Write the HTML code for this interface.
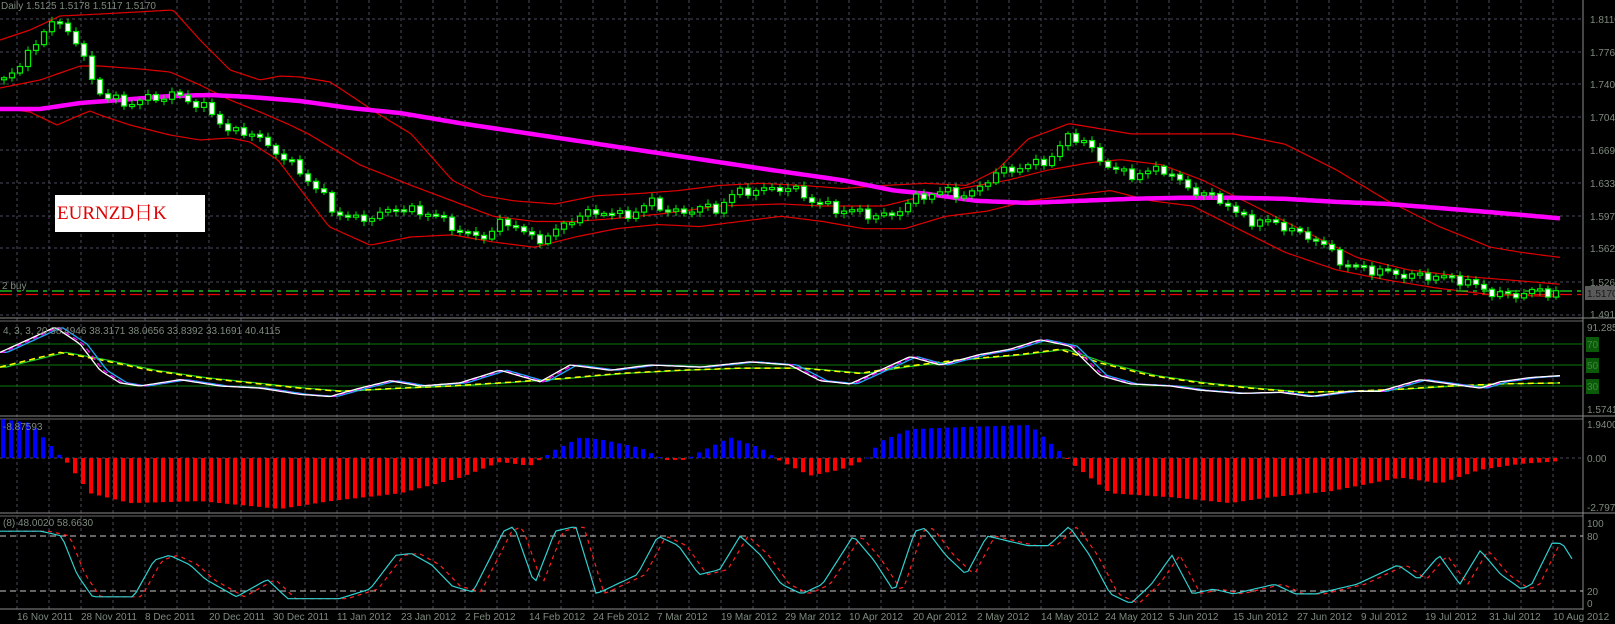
<!DOCTYPE html>
<html><head><meta charset="utf-8"><style>
html,body{margin:0;padding:0;background:#000;overflow:hidden}
svg{display:block}
text{font-family:"Liberation Sans",sans-serif;font-size:10px;fill:#7d8a7d}
.lbl{position:absolute;left:55px;top:195px;width:150px;height:37px;background:#fff;color:#e00000;font-family:"Liberation Serif","Noto Serif CJK SC",serif;font-size:19px;line-height:37px;padding-left:2px;box-sizing:border-box}
</style></head><body>
<div style="position:relative;width:1615px;height:624px">
<svg id="s" width="1615" height="624" viewBox="0 0 1615 624">
<g id="grid"></g>
<g id="g"></g>
<text x="1" y="9" font-size="9">Daily 1.5125 1.5178 1.5117 1.5170</text>
<text x="2" y="289" font-size="9">2 buy</text>
<text x="3" y="334" font-size="9">4, 3, 3, 20 38.4946 38.3171 38.0656 33.8392 33.1691 40.4115</text>
<text x="3" y="430" font-size="9">-8.87593</text>
<text x="3" y="526" font-size="9">(8) 48.0020 58.6630</text>
<g font-size="10">
<text x="1590" y="23">1.8110</text><text x="1590" y="56">1.7760</text><text x="1590" y="88">1.7400</text>
<text x="1590" y="121">1.7048</text><text x="1590" y="154">1.6690</text><text x="1590" y="187">1.6330</text>
<text x="1590" y="220">1.5970</text><text x="1590" y="252">1.5620</text><text x="1590" y="286">1.5260</text>
<text x="1590" y="318">1.4910</text>
<text x="1587" y="331">91.2858</text><text x="1587" y="413">1.5741</text>
<text x="1587" y="428">1.9400</text><text x="1587" y="462">0.00</text><text x="1587" y="511">-2.7978</text>
<text x="1587" y="527">100</text><text x="1587" y="540">80</text><text x="1587" y="595">20</text><text x="1587" y="607">0</text>
</g>
<rect x="1585" y="286" width="30" height="14" fill="#5a5a5a"/>
<text x="1587" y="297" style="fill:#1a1a1a">1.5170</text>
<rect x="1586" y="337" width="13" height="15" fill="#0a5a0a"/><text x="1587" y="348" style="fill:#3a8a3a">70</text>
<rect x="1586" y="358" width="13" height="15" fill="#0a5a0a"/><text x="1587" y="369" style="fill:#3a8a3a">50</text>
<rect x="1586" y="379" width="13" height="15" fill="#0a5a0a"/><text x="1587" y="390" style="fill:#3a8a3a">30</text>
<g id="dates" font-size="10"></g>
</svg>
<div class="lbl">EURNZD日K</div>
</div>
<script>
var NS="http://www.w3.org/2000/svg";
var G=document.getElementById('g'),GR=document.getElementById('grid');
function el(t,a,p){var e=document.createElementNS(NS,t);for(var k in a)e.setAttribute(k,a[k]);(p||G).appendChild(e);return e;}
function interp(P,x){if(x<=P[0][0])return P[0][1];for(var i=1;i<P.length;i++){if(x<=P[i][0]){var a=P[i-1],b=P[i];return a[1]+(b[1]-a[1])*(x-a[0])/(b[0]-a[0]);}}return P[P.length-1][1];}
function conv(P){return P.map(function(p){return[p[0]*1.028,p[1]*1.03];});}
function path(P,step,x0,x1){var d='';for(var x=x0;x<=x1;x+=step){d+=(d?'L':'M')+x.toFixed(1)+' '+interp(P,x).toFixed(1);}return d;}
for(var k=0;k<=48;k++){var x=17+32*k;el('line',{x1:x,y1:0,x2:x,y2:609,stroke:'#4a4a5a','stroke-dasharray':'3,3'},GR);}
[19,52,84,117,150,183,216,248,282,315].forEach(function(y){el('line',{x1:0,y1:y,x2:1583,y2:y,stroke:'#4a4a5a','stroke-dasharray':'3,3'},GR);});
[[318,321],[416,419],[513,516]].forEach(function(p){el('line',{x1:0,y1:p[0],x2:1615,y2:p[0],stroke:'#8a8a8a'},GR);el('line',{x1:0,y1:p[1],x2:1583,y2:p[1],stroke:'#6a6a6a'},GR);});
el('line',{x1:0,y1:609,x2:1583,y2:609,stroke:'#8a8a8a'},GR);
el('line',{x1:1583,y1:0,x2:1583,y2:610,stroke:'#8a8a8a'},GR);
[344,365,386].forEach(function(y){el('line',{x1:0,y1:y,x2:1583,y2:y,stroke:'#0c7a0c'},GR);});
[536,591].forEach(function(y){el('line',{x1:0,y1:y,x2:1583,y2:y,stroke:'#c8c8c8','stroke-dasharray':'6,4'},GR);});
el('line',{x1:0,y1:458,x2:1583,y2:458,stroke:'#4a4a5a','stroke-dasharray':'3,3'},GR);
var D=["16 Nov 2011","28 Nov 2011","8 Dec 2011","20 Dec 2011","30 Dec 2011","11 Jan 2012","23 Jan 2012","2 Feb 2012","14 Feb 2012","24 Feb 2012","7 Mar 2012","19 Mar 2012","29 Mar 2012","10 Apr 2012","20 Apr 2012","2 May 2012","14 May 2012","24 May 2012","5 Jun 2012","15 Jun 2012","27 Jun 2012","9 Jul 2012","19 Jul 2012","31 Jul 2012","10 Aug 2012"];
var DG=document.getElementById('dates');
D.forEach(function(t,i){var e=el('text',{x:17+64*i,y:620},DG);e.textContent=t;});
var early=[[0,78],[9,73],[17,69],[25,60],[33,47],[41,33],[49,24],[57,24],[65,27],[73,33],[81,55],[89,71],[97,90],[105,96],[113,99],[121,103],[137,103],[145,98],[169,97],[177,94],[185,97],[193,104],[201,108],[209,108],[217,118],[225,130],[241,133],[249,130],[257,137],[265,145]];
var late=conv([[270,148],[290,165],[310,185],[325,205],[335,210],[350,212],[370,210],[380,200],[395,205],[410,205],[425,210],[440,220],[455,228],[470,230],[490,215],[505,220],[520,235],[540,225],[560,210],[575,207],[590,205],[605,210],[620,205],[635,195],[650,205],[665,207],[680,200],[695,205],[710,190],[725,185],[740,185],[760,182],[775,185],[790,195],[805,200],[820,205],[835,205],[850,210],[865,210],[880,200],[895,190],[910,188],[925,185],[940,192],[955,180],[965,170],[980,165],[995,162],[1010,158],[1025,152],[1040,130],[1055,138],[1070,155],[1085,165],[1100,170],[1115,168],[1130,162],[1145,175],[1160,185],[1175,190],[1190,195],[1205,210],[1220,215],[1235,215],[1250,220],[1265,228],[1280,232],[1295,245],[1310,258],[1325,260],[1340,263],[1355,265],[1370,268],[1395,268],[1410,270],[1425,272],[1440,280],[1455,285],[1470,288],[1485,283],[1500,283],[1515,284]]).filter(function(p){return p[0]>270;});
var CL=early.concat(late);
var up=[[0,40],[30,30],[60,16],[100,14],[173,10],[200,40],[230,70],[260,80],[280,76],[300,77],[330,82],[350,95],[380,115]].concat(conv([[400,130],[440,175],[470,190],[500,195],[540,198],[580,190],[620,188],[660,185],[700,180],[740,178],[780,180],[820,183],[860,180],[900,178],[940,180],[970,165],[1000,135],[1040,120],[1070,125],[1100,130],[1150,130],[1200,130],[1250,140],[1300,165],[1350,195],[1400,220],[1450,240],[1480,245],[1518,250]]));
var mid=[[0,88],[40,80],[80,66],[100,66],[140,69],[170,72],[200,85],[230,100],[260,112],[290,125]].concat(conv([[300,130],[350,160],[400,180],[440,195],[480,210],[520,215],[560,215],[600,212],[640,208],[700,200],[760,198],[800,200],[860,200],[900,190],[940,182],[980,175],[1020,165],[1060,158],[1090,155],[1130,160],[1170,175],[1220,200],[1270,225],[1320,250],[1370,262],[1420,268],[1470,272],[1518,276]]));
var lo=[[0,108],[30,112],[57,125],[80,115],[90,111],[100,115],[130,125],[170,135],[200,140],[230,138],[250,142],[262,150]].concat(conv([[270,155],[320,220],[360,238],[400,230],[440,228],[480,235],[520,240],[560,230],[600,222],[640,218],[680,220],[720,215],[760,210],[800,215],[840,222],[880,222],[920,210],[960,205],[1000,195],[1040,190],[1080,185],[1120,195],[1160,200],[1200,220],[1250,245],[1300,262],[1350,272],[1400,280],[1450,286],[1518,288]]));
[up,mid,lo].forEach(function(P){el('path',{d:path(P,3,0,1562),fill:'none',stroke:'#e00000','stroke-width':1.2});});
el('line',{x1:0,y1:291,x2:1583,y2:291,stroke:'#22dd22','stroke-width':1.3,'stroke-dasharray':'12,5,4,5'});
el('line',{x1:0,y1:294.5,x2:1583,y2:294.5,stroke:'#ee0000','stroke-width':1.3,'stroke-dasharray':'12,5,4,5'});
var ma=[[0,109],[40,109],[60,106],[80,103],[120,100],[170,96],[210,95],[250,97],[300,101],[350,108],[400,113]].concat(conv([[450,120],[550,135],[650,150],[750,165],[820,175],[870,185],[900,188],[950,195],[1000,197],[1050,195],[1100,193],[1150,192],[1200,192],[1250,193],[1300,196],[1350,198],[1400,202],[1450,206],[1518,212]]));
el('path',{d:path(ma,4,0,1563),fill:'none',stroke:'#ff00ff','stroke-width':4.5});
var prevC=interp(CL,0);
for(var i=0;;i++){var x=4+8*i;if(x>1563)break;
 var c=interp(CL,x)+3.5*Math.sin(i*1.7)+2*Math.cos(i*2.9);var o=prevC;prevC=c;
 var bTop=Math.min(o,c),bBot=Math.max(o,c);if(bBot-bTop<2){bBot=bTop+2;}
 var wt=bTop-2-3*Math.abs(Math.sin(i*1.3)),wb=bBot+2+3*Math.abs(Math.cos(i*0.9));
 el('line',{x1:x,y1:wt,x2:x,y2:wb,stroke:'#00ee00'});
 el('rect',{x:x-2.5,y:bTop,width:5,height:bBot-bTop,fill:(c>o?'#ffffff':'#000000'),stroke:'#00ee00','stroke-width':1.2});
}
function sy(v){return 365-(v-50)*1.05;}
var fast=[[0,62],[30,75],[55,86],[80,70],[100,45],[120,33],[140,30],[180,36],[220,30],[260,28],[300,22],[330,20],[360,28],[390,35],[420,30],[460,33],[500,45],[540,34],[570,50],[610,45],[650,50],[700,48],[750,53],[790,50],[820,35],[850,32],[880,45],[910,58],[940,50],[980,60],[1010,65],[1040,74],[1070,68],[1100,40],[1130,32],[1170,30],[1200,26],[1240,23],[1280,24],[1310,20],[1350,25],[1380,25],[1420,36],[1450,32],[1480,28],[1500,34],[1530,38],[1562,40]];
var slow=[[0,48],[60,62],[100,55],[150,45],[200,38],[250,33],[300,28],[340,25],[400,28],[450,30],[500,33],[560,37],[620,42],[680,45],[740,47],[800,47],[860,42],[900,48],[960,55],[1020,60],[1060,65],[1100,52],[1150,40],[1200,33],[1250,28],[1300,24],[1350,25],[1400,27],[1450,30],[1500,32],[1562,33]];
function sp(P,sh){var Q=P.map(function(p){return[p[0]+sh,sy(p[1])];});return path(Q,3,0,1562);}
el('path',{d:sp(slow,6),fill:'none',stroke:'#22cc22','stroke-width':1.2});
el('path',{d:sp(slow,0),fill:'none',stroke:'#ffff00','stroke-width':1.5,'stroke-dasharray':'6,4'});
el('path',{d:sp(fast,7),fill:'none',stroke:'#1eaaff','stroke-width':1.3});
el('path',{d:sp(fast,3),fill:'none',stroke:'#ff00ff','stroke-width':1.3,'stroke-dasharray':'5,4'});
el('path',{d:sp(fast,0),fill:'none',stroke:'#ffffff','stroke-width':1.3});
var mv=[[0,1.9],[30,1.7],[45,0.9],[58,0.2],[65,-0.1],[90,-1.8],[130,-2.3],[200,-2.2],[280,-2.6],[330,-2.2],[400,-1.8],[460,-1.0],[500,-0.2],[530,-0.4],[555,0.4],[580,1.0],[600,0.9],[640,0.5],[665,-0.1],[685,-0.1],[700,0.3],[730,1.0],[760,0.5],[778,-0.1],[810,-0.9],[840,-0.6],[865,-0.1],[880,0.8],[910,1.4],[960,1.5],[1030,1.6],[1060,0.3],[1075,-0.4],[1110,-1.8],[1170,-2.0],[1230,-2.3],[1270,-2.0],[1330,-1.7],[1400,-1.0],[1440,-1.3],[1480,-0.6],[1520,-0.3],[1562,-0.15]];
for(var i=0;;i++){var x=3+8*i;if(x>1562)break;var v=interp(mv,x);
 if(v>=0){var h=v*20.6;el('rect',{x:x-2,y:458-h,width:4,height:Math.max(h,1),fill:'#0000ff'});}
 else{var h=-v*19.6;el('rect',{x:x-2,y:458,width:4,height:Math.max(h,1),fill:'#ff0000'});}}
var cy=[[0,515],[40,515],[60,520],[75,560],[90,583],[130,583],[150,545],[165,540],[185,550],[200,565],[230,583],[260,565],[280,585],[330,585],[360,575],[385,540],[400,538],[420,550],[440,572],[460,578],[490,515],[500,510],[520,570],[540,515],[560,510],[580,580],[600,570],[620,560],[640,520],[660,530],[680,560],[700,555],[720,520],[740,540],[760,570],[780,580],[800,570],[830,520],[850,545],[870,578],[890,515],[900,512],[920,540],[940,560],[960,520],[980,525],[1000,530],[1020,530],[1040,510],[1060,540],[1080,580],[1100,590],[1120,570],[1140,540],[1160,580],[1180,575],[1200,580],[1220,575],[1240,570],[1260,580],[1280,580],[1300,575],[1320,570],[1340,560],[1360,550],[1380,565],[1400,540],[1410,555],[1420,570],[1440,535],[1460,560],[1480,575],[1490,570],[1510,527],[1520,528],[1530,545]].map(function(p){return[p[0]*1.028,536+(p[1]-520)*55/57];});
el('path',{d:path(cy.map(function(p){return[p[0]+8,p[1]];}),4,8,1562),fill:'none',stroke:'#ff2020','stroke-width':1.2,'stroke-dasharray':'4,4'});
el('path',{d:path(cy,4,0,1573),fill:'none',stroke:'#30d0d0','stroke-width':1.2});
</script>
</body></html>
